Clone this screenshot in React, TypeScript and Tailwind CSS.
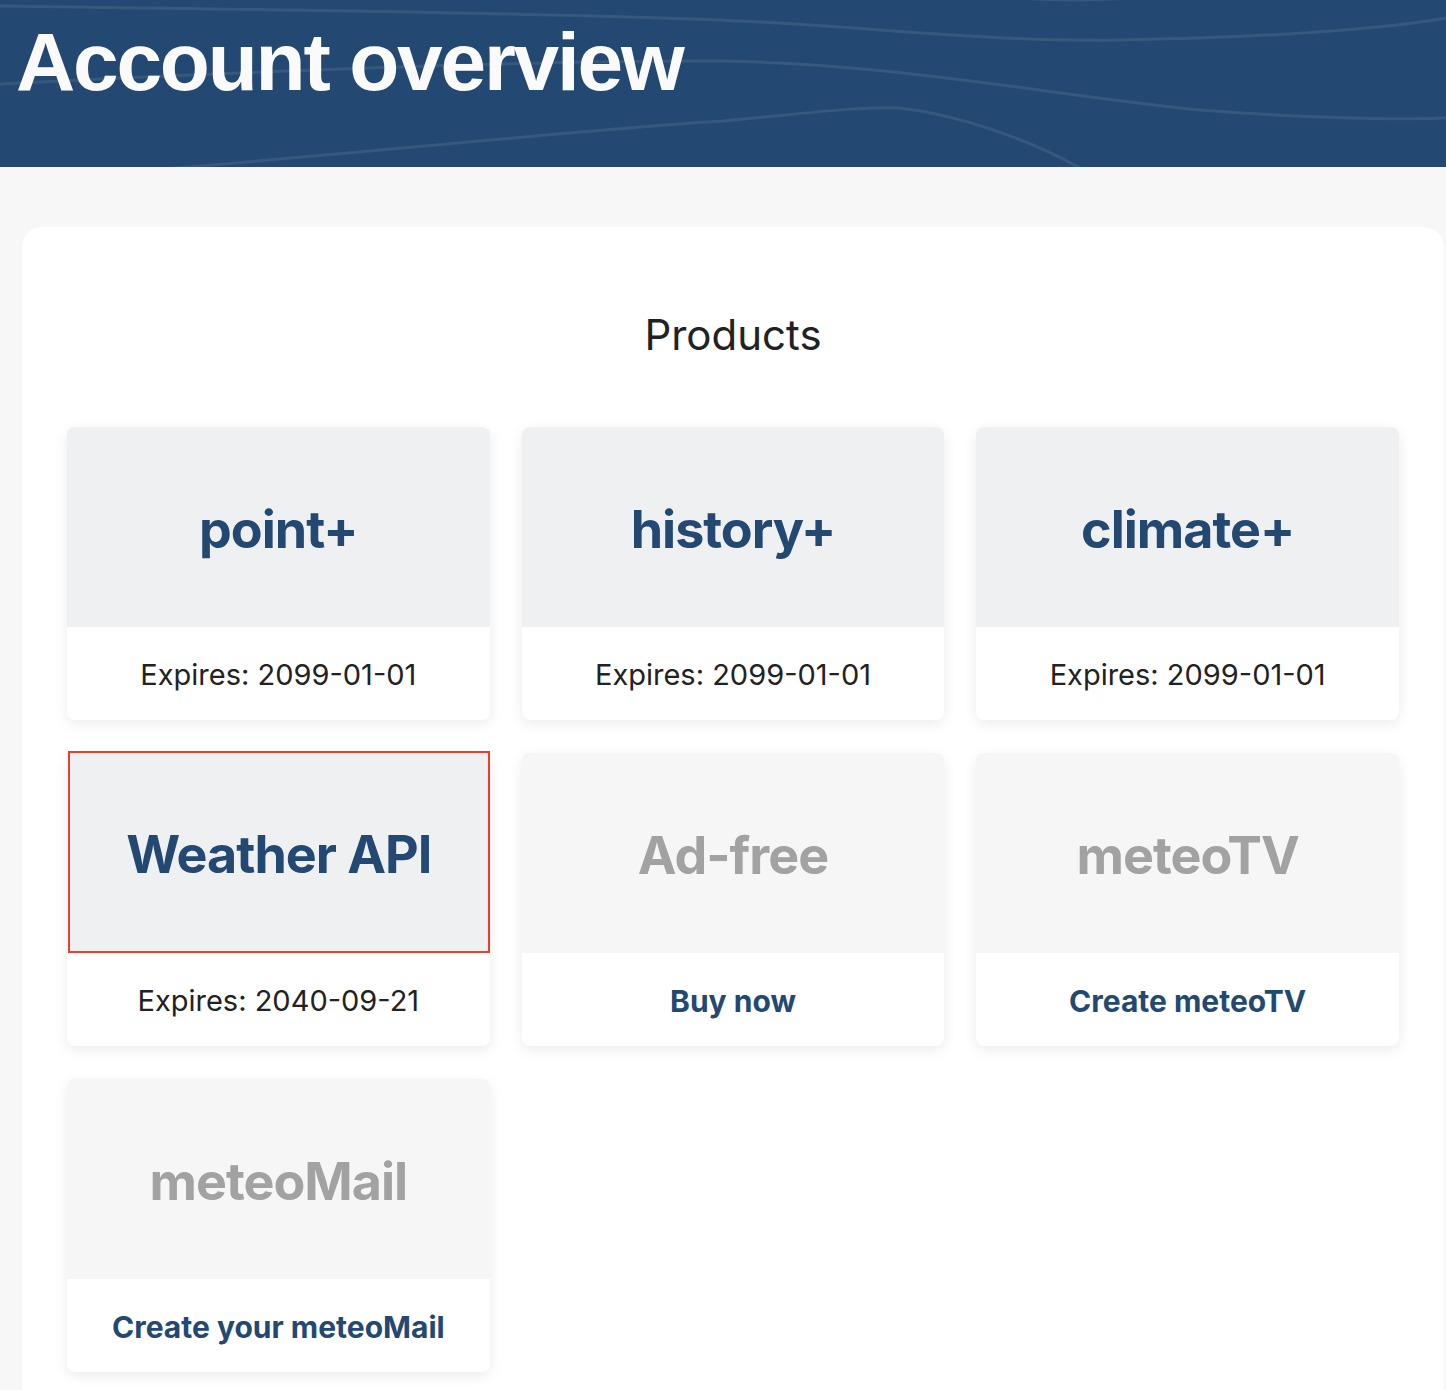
import React from "react";

type P = { name: string; footer: string; active: boolean; link?: boolean; highlight?: boolean };

const products: P[] = [
  { name: "point+", footer: "Expires: 2099-01-01", active: true },
  { name: "history+", footer: "Expires: 2099-01-01", active: true },
  { name: "climate+", footer: "Expires: 2099-01-01", active: true },
  { name: "Weather API", footer: "Expires: 2040-09-21", active: true, highlight: true },
  { name: "Ad-free", footer: "Buy now", active: false, link: true },
  { name: "meteoTV", footer: "Create meteoTV", active: false, link: true },
  { name: "meteoMail", footer: "Create your meteoMail", active: false, link: true },
];

function Card({ p }: { p: P }) {
  return (
    <div className="flex flex-col rounded-[8px] bg-white shadow-[0_4px_14px_rgba(0,0,0,0.08)]">
      <div
        className={
          "flex items-center justify-center pt-[6px] " +
          (p.active ? "bg-[#eff0f2] " : "bg-[#f6f6f6] ") +
          (p.highlight
            ? "-mt-[2px] ml-[1px] h-[202px] border-2 border-[#e8402a]"
            : "h-[200px] rounded-t-[8px]")
        }
      >
        <span
          className={
            "text-[52px] font-bold tracking-[-1px] leading-none " +
            (p.active ? "text-[#234871]" : "text-[#a2a2a2]")
          }
        >
          {p.name}
        </span>
      </div>
      <div className="flex h-[93px] items-center justify-center rounded-b-[8px] pt-[2px]">
        <span
          className={
            "leading-none " +
            (p.link ? "text-[30px] font-bold text-[#234871]" : "text-[29px] text-[#222]")
          }
        >
          {p.footer}
        </span>
      </div>
    </div>
  );
}

export default function App() {
  return (
    <div className="min-h-[1390px] bg-[#f7f7f7] font-['Inter','Noto_Sans',sans-serif]">
      <header className="relative h-[167px] overflow-hidden bg-[#234871]">
        <svg className="absolute inset-0" width="1446" height="167" viewBox="0 0 1446 167" fill="none">
          <g stroke="rgba(255,255,255,0.09)" strokeWidth="3">
            <path d="M0 6 C 300 10, 600 14, 760 22 C 900 30, 1000 42, 1120 40 C 1250 38, 1380 30, 1446 18" />
            <path d="M0 84 C 200 74, 500 60, 723 61 C 900 64, 1050 95, 1200 110 C 1300 118, 1400 120, 1446 118" />
            <path d="M150 170 C 400 150, 600 128, 723 121 C 800 114, 860 106, 900 108 C 960 115, 1030 140, 1080 168" />
            <path d="M960 -10 C 1000 0, 1080 2, 1130 -2" />
          </g>
        </svg>
        <h1 className="relative pl-[16px] pt-[18px] font-['Liberation_Sans',Arial,sans-serif] text-[82px] font-bold leading-[88px] tracking-[-2.2px] text-[#fafafa]">
          Account overview
        </h1>
      </header>
      <main className="ml-[22px] mr-[2px] mt-[60px] rounded-[20px] bg-white px-[45px] pt-[83px] pb-[40px]">
        <h2 className="mb-[67px] text-center text-[42px] leading-[50px] text-[#222]">Products</h2>
        <div className="grid grid-cols-3 gap-x-[32px] gap-y-[33px]">
          {products.map((p) => (
            <Card key={p.name} p={p} />
          ))}
        </div>
      </main>
    </div>
  );
}
